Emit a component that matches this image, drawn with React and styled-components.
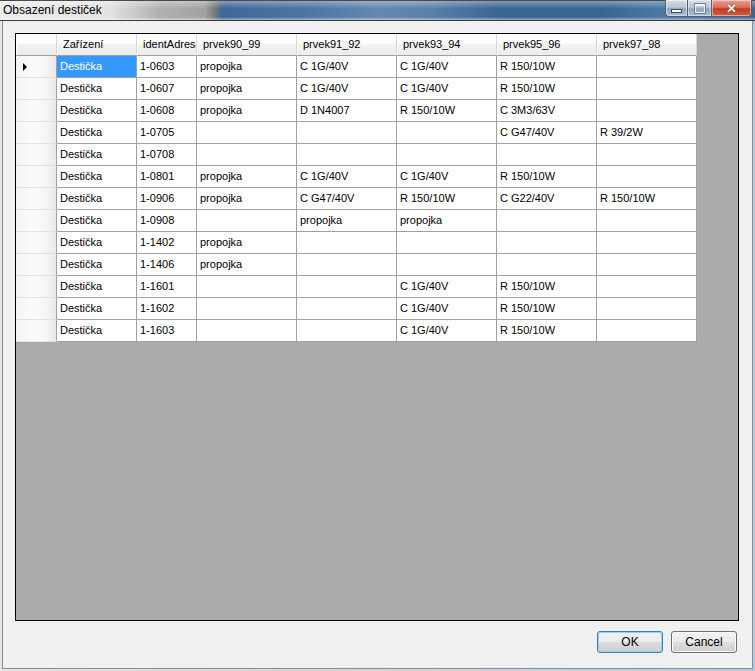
import React from 'react';
import styled, { createGlobalStyle } from 'styled-components';

const GlobalStyle = createGlobalStyle`
  html, body {
    margin: 0;
    padding: 0;
    background: #dcdcdc;
  }
  body {
    font-family: "Liberation Sans", Arial, sans-serif;
  }
`

const Window = styled.div`
  width: 755px;
  height: 671px;
  display: flex;
  flex-direction: column;
  background: linear-gradient(to right, #e6e6e6, #d6d6d6 40%, #c9d3de 70%, #b9c8d8);
  overflow: hidden;
`

const TitleBar = styled.div`
  height: 21px;
  flex: none;
  box-sizing: border-box;
  display: flex;
  align-items: flex-start;
  border-top: 1px solid #4a4a4a;
  border-bottom: 1px solid #3a3a3a;
  background:
    linear-gradient(to bottom, rgba(255,255,255,0.35), rgba(255,255,255,0) 40%, rgba(0,0,0,0) 85%, rgba(255,255,255,0.5)),
    linear-gradient(to right, #ececec 0, #e2e2e2 110px, #b0b0b0 160px, #a2a2a2 205px, #7c7c7c 214px, #3f6897 222px, #4a74a2 300px, #6489b0 380px, #5a80a8 430px, #3a6593 500px, #3a6593 600px, #4d78a4 660px, #3a6593 100%);
`

const Title = styled.div`
  padding-left: 3px;
  font-size: 12px;
  line-height: 19px;
  color: #000;
`

const Caption = styled.div`
  margin-left: auto;
  margin-right: 3px;
  margin-top: -1px;
  display: flex;
`

const CapButton = styled.div`
  width: ${(p) => p.$w}px;
  height: 17px;
  box-sizing: border-box;
  border: 1px solid #4e5f74;
  border-top: none;
  display: flex;
  align-items: center;
  justify-content: center;
  background: ${(p) => p.$close
    ? 'linear-gradient(to bottom, #e8a090 0%, #d7715c 45%, #c23b24 55%, #d45c3e 100%)'
    : 'linear-gradient(to bottom, #d8e0ea 0%, #b9c6d6 45%, #94a6bd 55%, #a9bbd0 100%)'};
  box-shadow: inset 0 0 0 1px rgba(255,255,255,0.45);
  &:first-child { border-radius: 0 0 0 4px; }
  &:last-child { border-radius: 0 0 4px 0; }
  & + & { border-left: none; }
`

const MinGlyph = styled.div`
  width: 9px;
  height: 2px;
  margin-top: 5px;
  background: #fff;
  border: 1px solid #3a4a60;
`

const MaxGlyph = styled.div`
  width: 8px;
  height: 6px;
  border: 1px solid #fff;
  border-top-width: 2px;
  outline: 1px solid #5c6e86;
  opacity: 0.8;
`

const CloseGlyph = styled.div`
  color: #fff;
  font-weight: bold;
  font-size: 13px;
  line-height: 13px;
  text-shadow: 0 0 1px #5a1a10, 0 0 1px #5a1a10;
`

const Client = styled.div`
  flex: 1;
  margin: 0 2px 2px 2px;
  border: 1px solid #8c8c8c;
  border-top: none;
  background: #f0f0f0;
  box-sizing: border-box;
  padding: 12px 13px 15px 12px;
  display: flex;
  flex-direction: column;
  gap: 10px;
`

const GridBox = styled.div`
  flex: 1;
  border: 1px solid #000;
  background: #ababab;
  overflow: hidden;
`

const Grid = styled.div`
  display: grid;
  grid-template-columns: 41px 80px 60px 100px 100px 100px 100px 100px;
  grid-auto-rows: 22px;
  width: max-content;
  font-size: 11px;
  color: #000;
`

const HeadCell = styled.div`
  box-sizing: border-box;
  border-right: 1px solid #d5d5d5;
  border-bottom: 1px solid #a0a0a0;
  box-shadow: inset 1px 0 0 #ffffff;
  background: linear-gradient(to bottom, #ffffff 0%, #fbfbfb 45%, #f1f1f2 55%, #ececec 100%);
  padding-left: ${(p) => (p.$corner ? 0 : 6)}px;
  line-height: 21px;
  white-space: nowrap;
  overflow: hidden;
`

const RowHead = styled.div`
  box-sizing: border-box;
  border-right: 1px solid #a0a0a0;
  border-bottom: 1px solid #e2e2e2;
  background: linear-gradient(to right, #f3f3f3 0%, #fbfbfb 35%, #f7f7f7 70%, #e9e9e9 100%);
  display: flex;
  align-items: center;
  padding-left: 7px;
`

const Arrow = styled.div`
  width: 0;
  height: 0;
  border-top: 4px solid transparent;
  border-bottom: 4px solid transparent;
  border-left: 4px solid #000;
`

const Cell = styled.div`
  box-sizing: border-box;
  border-right: 1px solid #a0a0a0;
  border-bottom: 1px solid #a0a0a0;
  background: ${(p) => (p.$selected ? '#3399ff' : '#fff')};
  color: ${(p) => (p.$selected ? '#fff' : '#000')};
  padding-left: 3px;
  line-height: 21px;
  white-space: nowrap;
  overflow: hidden;
`

const ButtonRow = styled.div`
  display: flex;
  justify-content: flex-end;
  gap: 8px;
  padding-right: 2px;
`

const Button = styled.div`
  width: 66px;
  height: 22px;
  box-sizing: border-box;
  border: 1px solid ${(p) => (p.$default ? '#3c7fb1' : '#707070')};
  border-radius: 3px;
  box-shadow: inset 0 0 0 1px ${(p) => (p.$default ? '#98d1ef' : '#fbfbfb')};
  background: linear-gradient(to bottom, #f2f2f2 0%, #ebebeb 50%, #dddddd 51%, #cfcfcf 100%);
  font-size: 12px;
  line-height: 20px;
  text-align: center;
  color: #000;
`

const headers = ['Zařízení', 'identAdres', 'prvek90_99', 'prvek91_92', 'prvek93_94', 'prvek95_96', 'prvek97_98'];

const rows = [
  ['Destička', '1-0603', 'propojka', 'C 1G/40V', 'C 1G/40V', 'R 150/10W', ''],
  ['Destička', '1-0607', 'propojka', 'C 1G/40V', 'C 1G/40V', 'R 150/10W', ''],
  ['Destička', '1-0608', 'propojka', 'D 1N4007', 'R 150/10W', 'C 3M3/63V', ''],
  ['Destička', '1-0705', '', '', '', 'C G47/40V', 'R 39/2W'],
  ['Destička', '1-0708', '', '', '', '', ''],
  ['Destička', '1-0801', 'propojka', 'C 1G/40V', 'C 1G/40V', 'R 150/10W', ''],
  ['Destička', '1-0906', 'propojka', 'C G47/40V', 'R 150/10W', 'C G22/40V', 'R 150/10W'],
  ['Destička', '1-0908', '', 'propojka', 'propojka', '', ''],
  ['Destička', '1-1402', 'propojka', '', '', '', ''],
  ['Destička', '1-1406', 'propojka', '', '', '', ''],
  ['Destička', '1-1601', '', '', 'C 1G/40V', 'R 150/10W', ''],
  ['Destička', '1-1602', '', '', 'C 1G/40V', 'R 150/10W', ''],
  ['Destička', '1-1603', '', '', 'C 1G/40V', 'R 150/10W', ''],
];

export default function App() {
  return (
    <>
      <GlobalStyle />
      <Window>
        <TitleBar>
          <Title>Obsazení destiček</Title>
          <Caption>
            <CapButton $w={23}><MinGlyph /></CapButton>
            <CapButton $w={24}><MaxGlyph /></CapButton>
            <CapButton $w={40} $close><CloseGlyph>✕</CloseGlyph></CapButton>
          </Caption>
        </TitleBar>
        <Client>
          <GridBox>
            <Grid>
              <HeadCell $corner />
              {headers.map((h) => (
                <HeadCell key={h}>{h}</HeadCell>
              ))}
              {rows.map((r, i) => (
                <React.Fragment key={i}>
                  <RowHead>{i === 0 && <Arrow />}</RowHead>
                  {r.map((c, j) => (
                    <Cell key={j} $selected={i === 0 && j === 0}>{c}</Cell>
                  ))}
                </React.Fragment>
              ))}
            </Grid>
          </GridBox>
          <ButtonRow>
            <Button $default>OK</Button>
            <Button>Cancel</Button>
          </ButtonRow>
        </Client>
      </Window>
    </>
  );
}
